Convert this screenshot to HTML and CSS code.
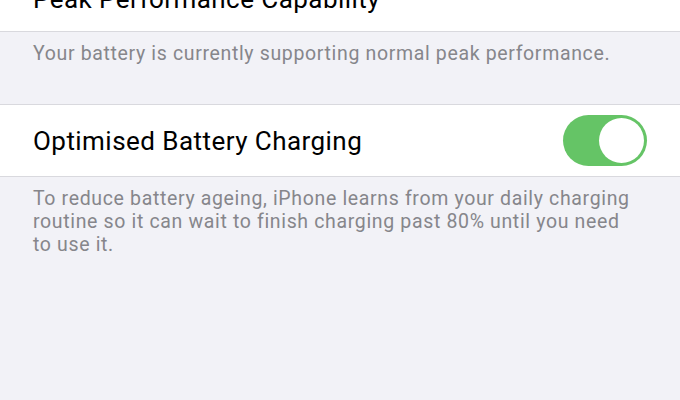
FILE: index.html
```html
<!DOCTYPE html>
<html>
<head>
<meta charset="utf-8">
<link rel="stylesheet" href="styles.css">
</head>
<body>
<div class="page">
  <div class="cell cell-top">
    <span class="label label-top">Peak Performance Capability</span>
  </div>
  <div class="footer">Your battery is currently supporting normal peak performance.</div>
  <div class="cell">
    <span class="label">Optimised Battery Charging</span>
    <div class="toggle"><div class="knob"></div></div>
  </div>
  <div class="footer">To reduce battery ageing, iPhone learns from your daily charging routine so it can wait to finish charging past 80% until you need to use it.</div>
</div>
</body>
</html>
```
FILE: styles.css
```css
html, body {
  margin: 0;
  padding: 0;
  background: #f2f2f7;
}
.page {
  width: 680px;
  height: 400px;
  overflow: hidden;
  font-family: Roboto, "Liberation Sans", sans-serif;
}
.cell {
  background: #ffffff;
  height: 71px;
  display: flex;
  align-items: center;
  justify-content: space-between;
  padding: 0 33px;
  border-bottom: 1px solid #d9d9de;
  border-top: 1px solid #d9d9de;
}
.cell-top {
  margin-top: -40px;
  border-top: none;
}
.label {
  font-size: 26px;
  letter-spacing: 0.45px;
  color: #000;
}
.label-top {
  margin-top: 6px;
}
.footer {
  padding: 10px 42px 0 33px;
  height: 62px;
  font-size: 19.5px;
  line-height: 23px;
  letter-spacing: 0.65px;
  color: #86868b;
}
.footer:last-child {
  height: auto;
}
.toggle {
  width: 84px;
  height: 51px;
  border-radius: 26px;
  background: #65c466;
  position: relative;
  flex: none;
}
.knob {
  position: absolute;
  top: 3px;
  right: 3px;
  width: 45px;
  height: 45px;
  border-radius: 50%;
  background: #fff;
}
```
